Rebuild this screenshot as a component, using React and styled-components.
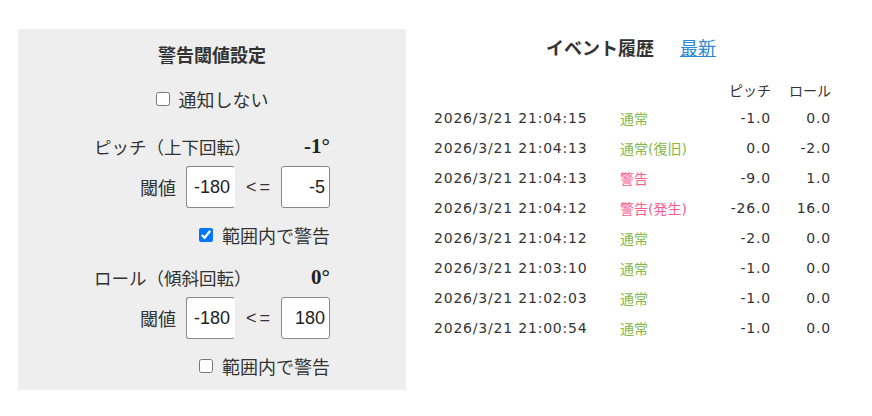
import React from 'react';
import styled, { createGlobalStyle } from 'styled-components';

const GlobalStyle = createGlobalStyle`
  body {
    margin: 0;
    background: #fff;
    color: #333;
    font-family: "DejaVu Sans", "Noto Sans CJK JP", sans-serif;
  }
`;

const Page = styled.div`
  display: flex;
  align-items: flex-start;
  padding: 29px 0 0 18px;
`;

const Panel = styled.section`
  width: 388px;
  height: 361px;
  box-sizing: border-box;
  background: #eeeeee;
  padding-top: 14px;
  display: flex;
  flex-direction: column;
  align-items: center;
`;

const Title = styled.h2`
  margin: 0;
  font-size: 18px;
  line-height: 26px;
  font-weight: bold;
  color: #333;
`;

const Check = styled.label`
  display: flex;
  align-items: center;
  gap: 9px;
  height: 26px;
  font-size: 18px;
  color: #333;
  margin-top: ${(p) => p.$top}px;

  input {
    margin: 0;
    width: 14px;
    height: 14px;
  }
`;

const Block = styled.div`
  width: 236px;
  display: flex;
  flex-direction: column;
  align-items: flex-end;
`;

const AxisRow = styled.div`
  align-self: stretch;
  display: flex;
  justify-content: space-between;
  align-items: center;
  height: 26px;
  margin-top: ${(p) => p.$top}px;
`;

const AxisLabel = styled.span`
  font-size: 17.5px;
  color: #333;
`;

const AxisValue = styled.span`
  font-family: "Liberation Serif", serif;
  font-weight: bold;
  font-size: 21px;
  color: #222;
`;

const RangeRow = styled.div`
  display: flex;
  align-items: center;
  height: 42px;
  margin-top: ${(p) => p.$top}px;
  font-size: 18px;
`;

const RangeLabel = styled.span`
  margin-right: 10px;
`;

const Op = styled.span`
  font-family: "Liberation Sans", sans-serif;
  font-size: 18px;
  letter-spacing: 3px;
  margin: 0 8px 0 11px;
`;

const NumInput = styled.input`
  box-sizing: border-box;
  width: 49px;
  height: 42px;
  padding: 0 4px 0 2px;
  border: 1px solid #8a8a8a;
  border-right-color: ${(p) => (p.$cut ? '#fff' : '#8a8a8a')};
  border-radius: 3px;
  background: #fff;
  font-family: "Liberation Sans", sans-serif;
  font-size: 18px;
  color: #222;
  text-align: right;
`;

const History = styled.section`
  width: 420px;
  margin-left: 14px;
  display: flex;
  flex-direction: column;
`;

const HistoryHead = styled.div`
  display: flex;
  justify-content: center;
  align-items: center;
  gap: 26px;
  height: 36px;
  padding-left: 2px;
`;

const HistoryTitle = styled.h2`
  margin: 0;
  font-size: 18px;
  font-weight: bold;
  color: #333;
`;

const Link = styled.a`
  font-size: 18px;
  color: #2a8ad8;
  text-decoration: underline;
`;

const Table = styled.table`
  border-collapse: collapse;
  table-layout: fixed;
  width: 397px;
  margin-left: 14px;
  margin-top: 11px;
  font-size: 14px;
  letter-spacing: 0.8px;
  color: #333;

  th {
    font-weight: normal;
    letter-spacing: 0;
    height: 27px;
    padding: 0;
  }
  td {
    height: 30px;
    padding: 0;
  }
`;

const DateCell = styled.td`
  white-space: nowrap;
`;

const StatusCell = styled.td`
  letter-spacing: 0;
  color: ${(p) => (p.$warn ? '#ff5c8d' : '#86b948')};
`;

const NumCell = styled.td`
  text-align: right;
`;

const NumHead = styled.th`
  text-align: right;
`;

const events = [
  ['2026/3/21 21:04:15', '通常', false, '-1.0', '0.0'],
  ['2026/3/21 21:04:13', '通常(復旧)', false, '0.0', '-2.0'],
  ['2026/3/21 21:04:13', '警告', true, '-9.0', '1.0'],
  ['2026/3/21 21:04:12', '警告(発生)', true, '-26.0', '16.0'],
  ['2026/3/21 21:04:12', '通常', false, '-2.0', '0.0'],
  ['2026/3/21 21:03:10', '通常', false, '-1.0', '0.0'],
  ['2026/3/21 21:02:03', '通常', false, '-1.0', '0.0'],
  ['2026/3/21 21:00:54', '通常', false, '-1.0', '0.0'],
];

function Axis({ label, value, min, max, warn, top }) {
  return (
    <>
      <AxisRow $top={top}>
        <AxisLabel>{label}</AxisLabel>
        <AxisValue>{value}</AxisValue>
      </AxisRow>
      <RangeRow $top={7}>
        <RangeLabel>閾値</RangeLabel>
        <NumInput $cut defaultValue={min} />
        <Op>&lt;=</Op>
        <NumInput defaultValue={max} />
      </RangeRow>
      <Check $top={14}>
        <input type="checkbox" defaultChecked={warn} />
        範囲内で警告
      </Check>
    </>
  );
}

export default function App() {
  return (
    <Page>
      <GlobalStyle />
      <Panel>
        <Title>警告閾値設定</Title>
        <Check $top={17}>
          <input type="checkbox" />
          通知しない
        </Check>
        <Block>
          <Axis label="ピッチ（上下回転）" value="-1°" min="-180" max="-5" warn top={21} />
          <Axis label="ロール（傾斜回転）" value="0°" min="-180" max="180" top={16} />
        </Block>
      </Panel>
      <History>
        <HistoryHead>
          <HistoryTitle>イベント履歴</HistoryTitle>
          <Link href="#">最新</Link>
        </HistoryHead>
        <Table>
          <colgroup>
            <col style={{ width: 186 }} />
            <col style={{ width: 100 }} />
            <col style={{ width: 51 }} />
            <col style={{ width: 60 }} />
          </colgroup>
          <thead>
            <tr>
              <th />
              <th />
              <NumHead>ピッチ</NumHead>
              <NumHead>ロール</NumHead>
            </tr>
          </thead>
          <tbody>
            {events.map(([date, status, warn, pitch, roll], i) => (
              <tr key={i}>
                <DateCell>{date}</DateCell>
                <StatusCell $warn={warn}>{status}</StatusCell>
                <NumCell>{pitch}</NumCell>
                <NumCell>{roll}</NumCell>
              </tr>
            ))}
          </tbody>
        </Table>
      </History>
    </Page>
  );
}
